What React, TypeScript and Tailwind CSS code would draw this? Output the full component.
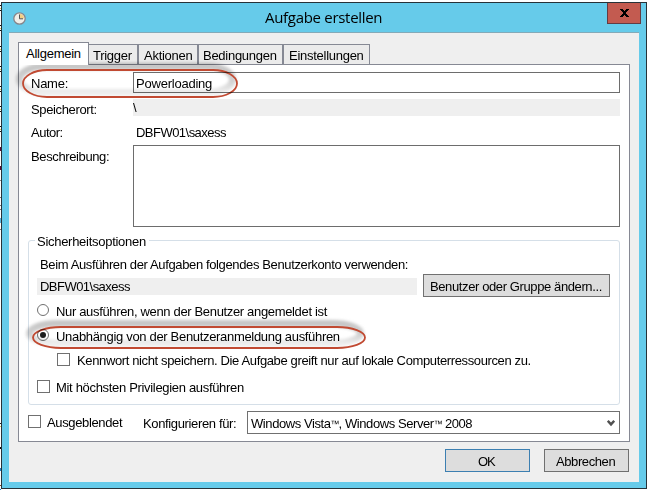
import React from "react";

const base = "whitespace-nowrap leading-[16px] text-[13px]";

function Label({ children, className = "tracking-[-0.37px]" }: { children: React.ReactNode; className?: string }) {
  return <span className={`${base} block ${className}`}>{children}</span>;
}

function CheckBox() {
  return <span className="block h-[13px] w-[13px] shrink-0 border border-[#707070] bg-white" />;
}

function Radio({ checked = false }: { checked?: boolean }) {
  return (
    <span className="flex h-[12px] w-[12px] shrink-0 items-center justify-center rounded-full border border-[#707070] bg-white">
      {checked && <span className="h-[6px] w-[6px] rounded-full bg-[#1c1c1c]" />}
    </span>
  );
}

function Tab({ children, className = "" }: { children: React.ReactNode; className?: string }) {
  return (
    <div className={`${base} h-[20px] border border-b-0 border-[#868994] bg-[#ebebeb] pt-[3px] tracking-[-0.27px] ${className}`}>
      {children}
    </div>
  );
}

function Tm() {
  return <span className="inline-block w-[8px] align-[1px] text-[9px] leading-[0]">™</span>;
}

/* Hand-marked oval with its drop shadow, laid over a form row. */
function Marker({ w, h, rx, className }: { w: number; h: number; rx: number; className: string }) {
  return (
    <svg className={`pointer-events-none absolute overflow-visible mix-blend-multiply ${className}`} width={w} height="32" fill="none">
      <defs>
        <filter id={`soft${w}`} x="-10%" y="-50%" width="120%" height="200%">
          <feGaussianBlur stdDeviation="1.8" />
        </filter>
        <linearGradient id={`fade${w}`} x1="0" y1="0" x2="0" y2="1">
          <stop offset="0" stopColor="#c6c6c6" />
          <stop offset="0.55" stopColor="#d0d0d0" />
          <stop offset="1" stopColor="#eeeeee" />
        </linearGradient>
      </defs>
      <rect x="-2.5" y="-2.5" width={w - 3} height={h - 1} rx={rx} ry={h / 2} stroke={`url(#fade${w})`} strokeWidth="7" filter={`url(#soft${w})`} />
      <rect x="1" y="1" width={w - 2} height={h} rx={rx} ry={h / 2} stroke="#c14a32" strokeWidth="1.8" />
    </svg>
  );
}

/* Sliver of the window lying behind the dialog: [gap above, height, colour]. */
const slivers: [number, number, string][] = [
  [3, 1, "#111"], [2, 1, "#d8c860"], [1, 1, "#111"],
  [14, 1, "#111"], [2, 1, "#d8c860"], [1, 1, "#111"],
  [15, 1, "#111"], [2, 1, "#d8c860"], [1, 1, "#111"],
  [14, 1, "#111"], [2, 1, "#d8c860"], [1, 1, "#111"],
  [14, 1, "#111"], [2, 1, "#d8c860"], [1, 1, "#111"],
  [14, 1, "#111"], [2, 1, "#d8c860"], [1, 1, "#111"],
  [14, 1, "#111"], [2, 1, "#d8c860"], [1, 1, "#111"],
  [15, 4, "#5c0a3c"], [15, 4, "#5c0a3c"], [10, 1, "#888"],
  [16, 1, "#777"], [7, 1, "#777"], [3, 1, "#777"], [8, 5, "#5bb5dd"], [6, 1, "#777"],
  [193, 1, "#222"], [2, 1, "#e0c850"], [20, 2, "#111"],
  [19, 3, "#2580c0"], [14, 1, "#8b4a20"], [3, 3, "#2580c0"],
];

export default function App() {
  return (
    <div className="flex h-[490px] w-[647px] overflow-hidden bg-white pt-[2px] font-['Liberation_Sans',Arial,sans-serif] text-black">
      <div className="w-px shrink-0 overflow-hidden">
        {slivers.map(([gap, height, color], i) => (
          <div key={i} style={{ marginTop: gap, height, backgroundColor: color }} />
        ))}
      </div>
      <div className="flex h-[487px] w-[646px] shrink-0 flex-col border border-[#263238] bg-[#66cbea]">
        <header className="flex h-[29px] items-start">
          <svg className="mt-[9px] ml-[11px]" width="13" height="13" viewBox="0 0 13 13">
            <circle cx="6.5" cy="6.5" r="5.7" fill="#f1efe9" stroke="#85858a" strokeWidth="1.3" />
            <path d="M6.5 6.5V1.8A4.7 4.7 0 0 1 11.2 6.5Z" fill="#f3cf86" />
            <path d="M6.5 2.5v4.3H10" fill="none" stroke="#555" />
          </svg>
          <h1 className="ml-[239px] pt-[4px] font-['Open_Sans',sans-serif] text-[15px] leading-[20px] tracking-[-0.3px] whitespace-nowrap">Aufgabe erstellen</h1>
          <div className="mr-[5px] ml-auto flex h-[21px] w-[34px] items-center justify-center border border-t-0 border-[#643b42] bg-[#c35b50]">
            <svg width="9" height="8" viewBox="0 0 9 8" fill="#000" shapeRendering="crispEdges">
              <path d="M0 0h3v1h1v1h1V1h1V0h3v1H8v1H7v1H6v2h1v1h1v1h1v1H6V7H5V6H4v1H3v1H0V7h1V6h1V5h1V3H2V2H1V1H0z" />
            </svg>
          </div>
        </header>
        <main className="mx-[7px] flex h-[450px] flex-col border-t border-[#84aab8] bg-[#efefef]">
          <nav className="flex h-[31px] items-end pl-[9px]">
            <div className={`${base} z-10 -mb-px h-[23px] w-[71px] border border-b-0 border-[#868994] bg-white pt-[3px] pl-[7px] tracking-[-0.25px]`}>Allgemein</div>
            <Tab className="w-[49px] border-l-0 pl-[4px]">Trigger</Tab>
            <Tab className="w-[60px] pl-[5px]">Aktionen</Tab>
            <Tab className="w-[85px] pl-[4px]">Bedingungen</Tab>
            <Tab className="w-[87px] pl-[5px]">Einstellungen</Tab>
          </nav>
          <section className="relative ml-[9px] h-[378px] w-[612px] border border-[#868994] bg-white">
            <div className="flex h-[34px] pt-[7px] pl-[12px]">
              <Label className="w-[102px] pt-[4px] tracking-[-0.25px]">Name:</Label>
              <div className="h-[21px] w-[487px] border border-[#6d6d6d] pt-[3px] pl-[2px]"><Label className="tracking-[-0.22px]">Powerloading</Label></div>
            </div>
            <div className="flex h-[25px] pl-[12px]">
              <Label className="w-[102px] pt-[3px] tracking-[-0.36px]">Speicherort:</Label>
              <div className="h-[17px] w-[487px] bg-[#efefef] pt-px"><Label>\</Label></div>
            </div>
            <div className="flex h-[21px] pt-px pl-[12px]">
              <Label className="w-[105px] tracking-[-0.5px]">Autor:</Label>
              <Label className="tracking-[-0.53px]">DBFW01\saxess</Label>
            </div>
            <div className="flex h-[91px] pl-[12px]">
              <Label className="w-[102px] pt-[4px] tracking-[-0.38px]">Beschreibung:</Label>
              <div className="h-[82px] w-[487px] border border-[#6d6d6d]" />
            </div>
            <div className="mt-[4px] ml-[9px] h-[165px] w-[592px] rounded-[3px] border border-[#d5dfe8]">
              <div className={`${base} mt-[-7px] ml-[6px] w-[114px] bg-white pl-[2px] tracking-[-0.28px]`}>Sicherheitsoptionen</div>
              <div className="mt-[7px] pl-[11px]"><Label>Beim Ausführen der Aufgaben folgendes Benutzerkonto verwenden:</Label></div>
              <div className="mt-px flex h-[23px] gap-[6px] pl-[8px]">
                <div className="mt-[4px] h-[17px] w-[380px] bg-[#efefef] pt-px pl-[3px]"><Label className="tracking-[-0.53px]">DBFW01\saxess</Label></div>
                <div className="h-[23px] w-[187px] border border-[#707070] bg-[#dddddd] pt-[4px] pl-[6px]"><Label className="tracking-[-0.39px]">Benutzer oder Gruppe ändern...</Label></div>
              </div>
              <div className="mt-[7px] flex items-start gap-[7px] pl-[8px]"><Radio /><Label className="tracking-[-0.34px]">Nur ausführen, wenn der Benutzer angemeldet ist</Label></div>
              <div className="mt-[9px] flex items-start gap-[7px] pl-[8px]"><Radio checked /><Label className="tracking-[-0.32px]">Unabhängig von der Benutzeranmeldung ausführen</Label></div>
              <div className="mt-[8px] flex items-start gap-[7px] pl-[28px]"><CheckBox /><Label>Kennwort nicht speichern. Die Aufgabe greift nur auf lokale Computerressourcen zu.</Label></div>
              <div className="mt-[11px] flex items-start gap-[6px] pl-[8px]"><CheckBox /><Label className="tracking-[-0.32px]">Mit höchsten Privilegien ausführen</Label></div>
            </div>
            <div className="flex h-[32px] items-start pt-[6px] pl-[9px]">
              <div className="flex w-[115px] gap-[6px] pt-[4px]"><CheckBox /><Label className="tracking-[-0.36px]">Ausgeblendet</Label></div>
              <Label className="w-[104px] pt-[5px] tracking-[-0.36px]">Konfigurieren für:</Label>
              <div className="flex h-[23px] w-[373px] items-start justify-between border border-[#707070] pt-[4px] pr-[4px] pl-[3px]">
                <Label className="tracking-[-0.42px]">Windows Vista<Tm />, Windows Server<Tm /> 2008</Label>
                <svg className="mt-[4px]" width="8" height="7" viewBox="0 0 8 7" fill="none" stroke="#505050" strokeWidth="2.4"><path d="M.8 .8 4 4.4 7.2 .8" /></svg>
              </div>
            </div>
            <Marker w={216} h={27} rx={24} className="top-[4px] left-[3px]" />
            <Marker w={334} h={21} rx={28} className="top-[261px] left-[13px]" />
          </section>
          <footer className="flex justify-end gap-[14px] pt-[7px] pr-[10px]">
            <div className="h-[23px] w-[85px] border border-[#3c7fb1] bg-[#ddd] pt-[4px] pl-[32px]"><Label className="tracking-[-1px]">OK</Label></div>
            <div className="h-[23px] w-[85px] border border-[#707070] bg-[#ddd] pt-[4px] pl-[11px]"><Label className="tracking-[-0.4px]">Abbrechen</Label></div>
          </footer>
        </main>
      </div>
    </div>
  );
}
